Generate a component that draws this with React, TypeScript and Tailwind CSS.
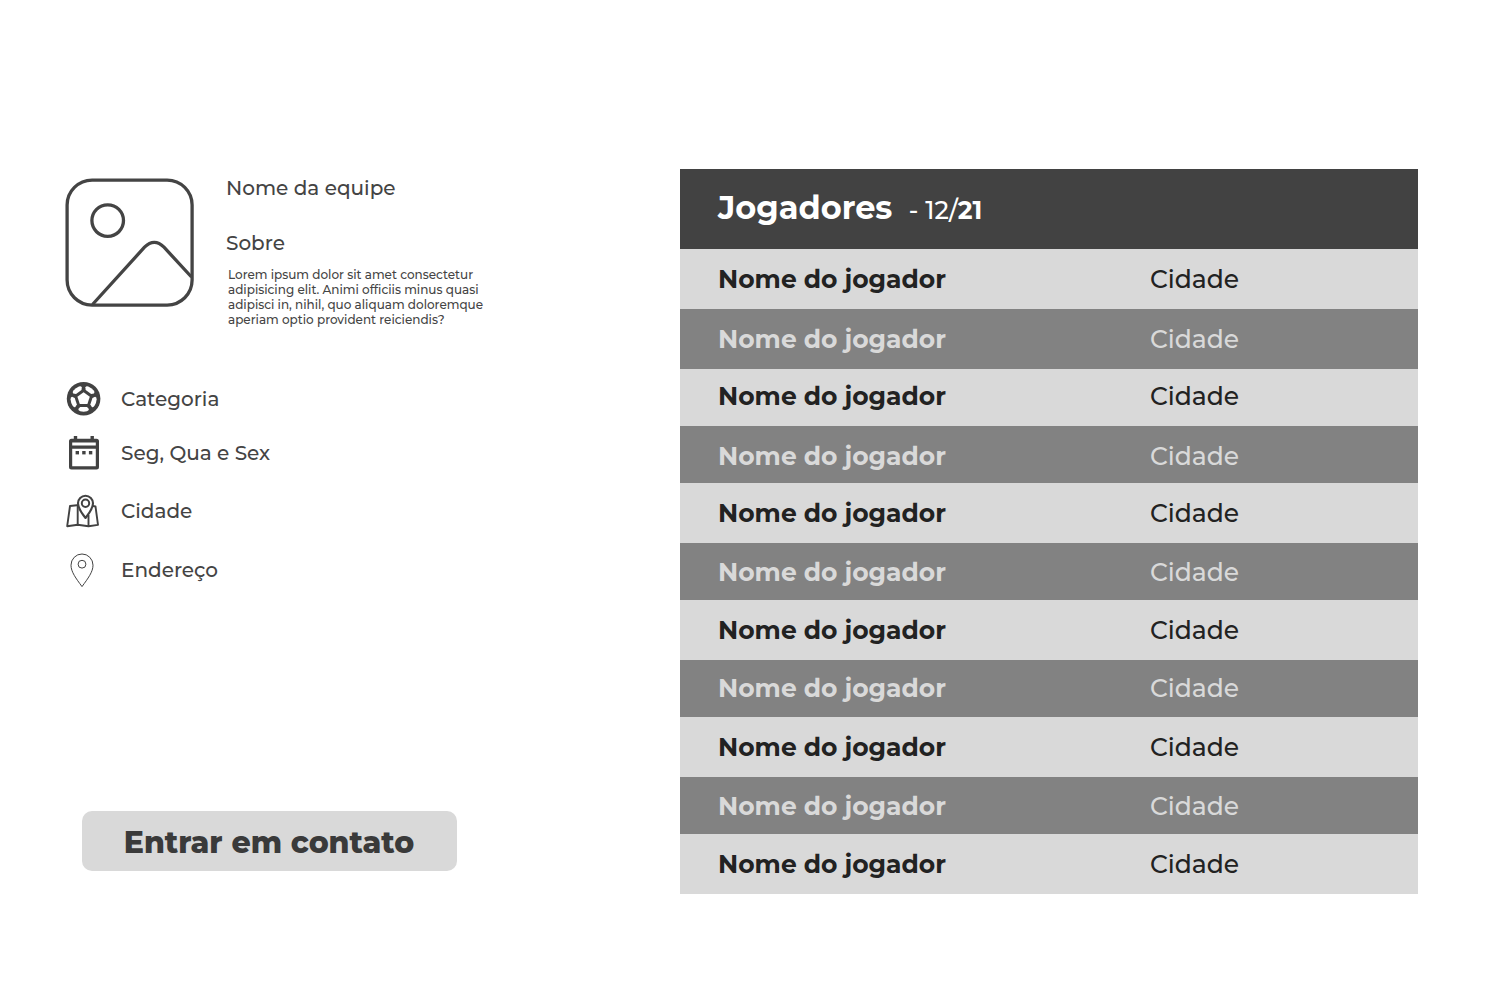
type Info = { label: string; icon: React.ReactNode; className: string };

function PictureIcon() {
  return (
    <svg width="129" height="129" viewBox="0 0 129 129" fill="none" stroke="#444444" strokeWidth="3.3" className="shrink-0">
      <rect x="2.1" y="2.1" width="125" height="125" rx="25" />
      <circle cx="42.7" cy="42.6" r="15.8" />
      <path d="M27.5 126.5 L79.5 69.2 Q89.3 59.4 99 69.2 L126.5 99" />
    </svg>
  );
}

function BallIcon() {
  return (
    <svg width="34" height="34" viewBox="-16.6 -16.7 34 34" className="overflow-visible">
      <circle r="16.8" fill="#424242" />
      <g fill="#ffffff">
        <path d="M0 -6.5 L6.2 -2 L3.8 5.3 H-3.8 L-6.2 -2 Z" />
        {[0, 72, 144, 216, 288].map((a) => (
          <path key={a} transform={`rotate(${a})`} d="M-3.4 8.2 H3.4 L5.3 10.4 Q5.5 12 3.4 12.6 Q0 13.5 -3.4 12.6 Q-5.5 12 -5.3 10.4 Z" />
        ))}
      </g>
    </svg>
  );
}

function CalendarIcon() {
  return (
    <svg width="34" height="34" viewBox="0 0 34 34" fill="#424242">
      <path fillRule="evenodd" d="M6.8 0 H10.2 V2.7 H23.5 V0 H26.9 V2.7 H29.5 Q32 2.7 32 5.2 V31 Q32 33.5 29.5 33.5 H4.5 Q2 33.5 2 31 V5.2 Q2 2.7 4.5 2.7 H6.8 Z M5.2 6.5 V9.5 H28.8 V6.5 Z M5.2 12.7 V30.3 H28.8 V12.7 Z" />
      <rect x="8.6" y="15" width="3.4" height="3.4" />
      <rect x="15.2" y="15" width="3.4" height="3.4" />
      <rect x="21.9" y="15" width="3.4" height="3.4" />
    </svg>
  );
}

function MapIcon() {
  return (
    <svg width="34" height="34" viewBox="0 0 34 34" fill="none" stroke="#424242" strokeWidth="1.9" strokeLinejoin="round" className="overflow-visible">
      <path d="M12 11 L3 12 L0.2 32.2 L10.7 30.7 L21.5 32.2 L31 30.9 L28.5 12.5 L26 12" />
      <path d="M10.7 11.3 V30.5 M21.5 21 V32" />
      <path strokeWidth="2.1" d="M18.5 24 C14.5 19 11 14 11 9.3 A7.5 7.5 0 0 1 26 9.3 C26 14 22.5 19 18.5 24 Z" />
      <circle cx="18.5" cy="9.2" r="3.7" strokeWidth="2" />
    </svg>
  );
}

function PinIcon() {
  return (
    <svg width="34" height="34" viewBox="0.5 -0.4 34 34" fill="none" stroke="#424242" strokeWidth="1" strokeLinejoin="round" className="overflow-visible">
      <path d="M15.5 33.2 C9.5 25 4.5 18.5 4.5 11.8 A11 11.2 0 0 1 26.5 11.8 C26.5 18.5 21.5 25 15.5 33.2 Z" />
      <circle cx="15.5" cy="10.8" r="3.9" />
    </svg>
  );
}

const infos: Info[] = [
  { label: "Categoria", icon: <BallIcon />, className: "h-[54px]" },
  { label: "Seg, Qua e Sex", icon: <CalendarIcon />, className: "h-[54px]" },
  { label: "Cidade", icon: <MapIcon />, className: "h-[62px]" },
  { label: "Endereço", icon: <PinIcon />, className: "h-[56px]" },
];

const rows = [
  "h-[60px] pb-px",
  "h-[60px] pb-px",
  "h-[57px] pb-1",
  "h-[57px] pt-[2px]",
  "h-[60px] pb-px",
  "h-[57px]",
  "h-[60px] pb-px",
  "h-[57px] pb-[2px]",
  "h-[60px] pb-px",
  "h-[57px]",
  "h-[60px] pb-px",
];

export default function App() {
  return (
    <main className="flex h-[982px] w-[1512px] overflow-hidden bg-white pt-[169px] font-['Montserrat','Inter',sans-serif] text-[#444444]">
      <section className="flex w-[680px] flex-col pt-[9px]">
        <div className="flex h-[194px] gap-8 pl-[65px]">
          <PictureIcon />
          <div className="flex flex-col">
            <h1 className="text-[20px] leading-[20px] font-medium">Nome da equipe</h1>
            <h2 className="mt-[35px] text-[20px] leading-[20px] font-medium">Sobre</h2>
            <p className="mt-[14px] ml-[2px] text-[12px] leading-[15px] font-medium whitespace-nowrap">
              Lorem ipsum dolor sit amet consectetur<br />
              adipisicing elit. Animi officiis minus quasi<br />
              adipisci in, nihil, quo aliquam doloremque<br />
              aperiam optio provident reiciendis?
            </p>
          </div>
        </div>
        <ul className="flex h-[439px] flex-col pl-[67px]">
          {infos.map((i) => (
            <li key={i.label} className={`flex items-center gap-5 text-[20px] leading-[24px] font-medium ${i.className}`}>
              {i.icon}
              <span>{i.label}</span>
            </li>
          ))}
        </ul>
        <button className="ml-[82px] h-[60px] w-[375px] rounded-[10px] bg-[#d9d9d9] pt-[3px] pr-px text-[30px] leading-[36px] font-extrabold text-[#3a3a3a]">
          Entrar em contato
        </button>
      </section>
      <section className="w-[738px]">
        <header className="flex h-[80px] items-baseline bg-[#424242] pt-[19px] pl-[38px] text-white">
          <h2 className="text-[32px] leading-[40px] font-bold">Jogadores</h2>
          <p className="ml-[16.5px] text-[25px] leading-[30px] font-medium">
            - 12/<span className="font-bold">21</span>
          </p>
        </header>
        {rows.map((row, n) => (
          <div key={n} className={`flex items-center pl-[38px] text-[25px] leading-[30px] ${n % 2 ? "bg-[#828282] text-[#d9d9d9]" : "bg-[#d9d9d9] text-[#222222]"} ${row}`}>
            <span className="w-[432px] font-bold">Nome do jogador</span>
            <span className="font-medium">Cidade</span>
          </div>
        ))}
      </section>
    </main>
  );
}
